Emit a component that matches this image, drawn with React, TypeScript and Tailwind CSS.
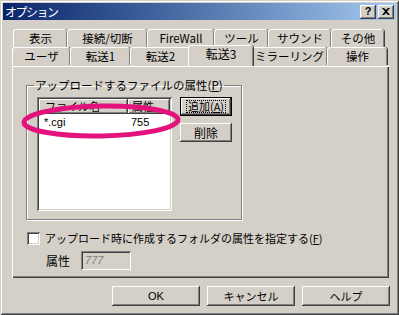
import React from 'react'

const raised =
  'shadow-[inset_-1px_-1px_0_#404040,inset_1px_1px_0_#ffffff,inset_-2px_-2px_0_#808080,inset_2px_2px_0_#d4d0c8]'
const sunken =
  'shadow-[inset_1px_1px_0_#808080,inset_-1px_-1px_0_#ffffff,inset_2px_2px_0_#404040,inset_-2px_-2px_0_#d4d0c8]'

const backRow = [
  { label: '表示', w: 'w-[54px]' },
  { label: '接続/切断', w: 'w-[80px]' },
  { label: 'FireWall', w: 'w-[67px]' },
  { label: 'ツール', w: 'w-[54px]' },
  { label: 'サウンド', w: 'w-[63px]' },
  { label: 'その他', w: 'w-[53px]' },
]

const frontRow = [
  { label: 'ユーザ', w: 'w-[58px]' },
  { label: '転送1', w: 'w-[60px]' },
  { label: '転送2', w: 'w-[60px]' },
  { label: '転送3', w: 'w-[61px]', active: true },
  { label: 'ミラーリング', w: 'w-[76px]' },
  { label: '操作', w: 'w-[60px]' },
]

function Tab({ label, w, active }: { label: string; w: string; active?: boolean }) {
  if (active) {
    return (
      <div className="relative z-10 -mx-[2px] -mt-[2px] flex h-[21px] w-[65px] items-start justify-center rounded-t-[3px] border-l border-t border-white bg-[#d4d0c8] pt-[2px] text-[12px] shadow-[inset_-1px_0_0_#808080,1px_0_0_#404040]">
        {label}
      </div>
    )
  }
  return (
    <div
      className={`${w} flex h-[18px] items-center justify-center rounded-t-[3px] border-l border-t border-white bg-[#d4d0c8] text-[11.5px] shadow-[inset_-1px_0_0_#808080,1px_0_0_#404040]`}
    >
      {label}
    </div>
  )
}

function Button({ children, className = '' }: { children: React.ReactNode; className?: string }) {
  return (
    <div className={`flex items-center justify-center bg-[#d4d0c8] ${raised} ${className}`}>{children}</div>
  )
}

export default function App() {
  return (
    <div className="relative flex h-[315px] w-[399px] flex-col bg-[#d4d0c8] p-[3px] font-['Noto_Sans_CJK_JP',sans-serif] text-[11px] leading-none text-black shadow-[inset_1px_1px_0_#d4d0c8,inset_-1px_-1px_0_#404040,inset_2px_2px_0_#ffffff,inset_-2px_-2px_0_#808080]">
      {/* title bar */}
      <div className="flex h-[17px] items-center bg-linear-to-r from-[#0a246a] to-[#a6caf0] pl-[2px] pr-[2px]">
        <span className="text-[12px] tracking-[-1.5px] text-white">オプション</span>
        <div className="ml-auto flex gap-[2px]">
          <div className={`flex h-[14px] w-[16px] items-center justify-center bg-[#d4d0c8] font-['Liberation_Sans',sans-serif] text-[11px] font-bold ${raised}`}>
            ?
          </div>
          <div className={`flex h-[14px] w-[16px] items-center justify-center bg-[#d4d0c8] ${raised}`}>
            <svg width="8" height="7" viewBox="0 0 8 7">
              <path d="M0 0h2l2 2 2-2h2L5 3.5 8 7H6L4 5 2 7H0l3-3.5z" fill="#000" />
            </svg>
          </div>
        </div>
      </div>

      <div className="flex flex-1 flex-col px-[9px] pt-[9px]">
        {/* tabs */}
        <div className="ml-[1px] flex">
          {backRow.map((t) => (
            <Tab key={t.label} {...t} />
          ))}
        </div>
        <div className="flex items-start">
          {frontRow.map((t) => (
            <Tab key={t.label} {...t} />
          ))}
        </div>

        {/* panel */}
        <div className="flex h-[212px] w-[377px] flex-col bg-[#d4d0c8] px-[14px] pt-[12px] shadow-[inset_1px_1px_0_#ffffff,inset_-1px_-1px_0_#404040,inset_-2px_-2px_0_#808080]">
          <fieldset className="h-[142px] w-[216px] border border-[#808080] shadow-[inset_1px_1px_0_#ffffff,1px_1px_0_#ffffff]">
            <legend className="ml-[7px] px-[1px] text-[11.5px] leading-[14px]">
              アップロードするファイルの属性(<span className="underline">P</span>)
            </legend>
            <div className="ml-[10px] mt-[5px] flex">
              <div className={`flex h-[114px] w-[135px] flex-col bg-white p-[2px] ${sunken}`}>
                <div className="flex h-[15px]">
                  <div className={`flex w-[89px] items-center pl-[6px] ${raised} bg-[#d4d0c8]`}>ファイル名</div>
                  <div className={`flex flex-1 items-center pl-[4px] ${raised} bg-[#d4d0c8]`}>属性</div>
                </div>
                <div className="flex h-[17px] items-center">
                  <span className="w-[89px] pl-[5px] font-['Liberation_Sans',sans-serif]">*.cgi</span>
                  <span className="pl-[3px] font-['Liberation_Sans',sans-serif]">755</span>
                </div>
              </div>
              <div className="ml-[8px] flex flex-col gap-[7px]">
                <div className="h-[19px] w-[52px] border border-black">
                  <Button className="h-full w-full">
                    <span className="border border-dotted border-black px-[1px]">
                      追加(<span className="underline">A</span>)
                    </span>
                  </Button>
                </div>
                <Button className="h-[19px] w-[52px] text-[12px]">削除</Button>
              </div>
            </div>
          </fieldset>

          <div className="ml-[1px] mt-[12px] flex items-center gap-[5px]">
            <div className={`h-[13px] w-[13px] bg-white ${sunken}`} />
            <span>
              アップロード時に作成するフォルダの属性を指定する(<span className="underline">F</span>)
            </span>
          </div>
          <div className="ml-[20px] mt-[6px] flex items-center gap-[11px]">
            <span className="text-[12px]">属性</span>
            <div className={`flex h-[19px] w-[50px] items-center bg-[#d4d0c8] pl-[4px] font-['Liberation_Sans',sans-serif] italic text-[#808080] ${sunken}`}>
              777
            </div>
          </div>
        </div>

        {/* dialog buttons */}
        <div className="mt-[8px] flex w-[378px] justify-end gap-[7px]">
          <Button className="h-[20px] w-[88px] font-['Liberation_Sans',sans-serif]">OK</Button>
          <Button className="h-[20px] w-[88px]">キャンセル</Button>
          <Button className="h-[20px] w-[88px]">ヘルプ</Button>
        </div>
      </div>

      {/* hand-drawn highlight */}
      <svg className="pointer-events-none absolute inset-0" width="399" height="315">
        <ellipse cx="101" cy="121" rx="77" ry="15" transform="rotate(-1 101 121)" fill="none" stroke="#e3127c" strokeWidth="5" />
      </svg>
    </div>
  )
}
